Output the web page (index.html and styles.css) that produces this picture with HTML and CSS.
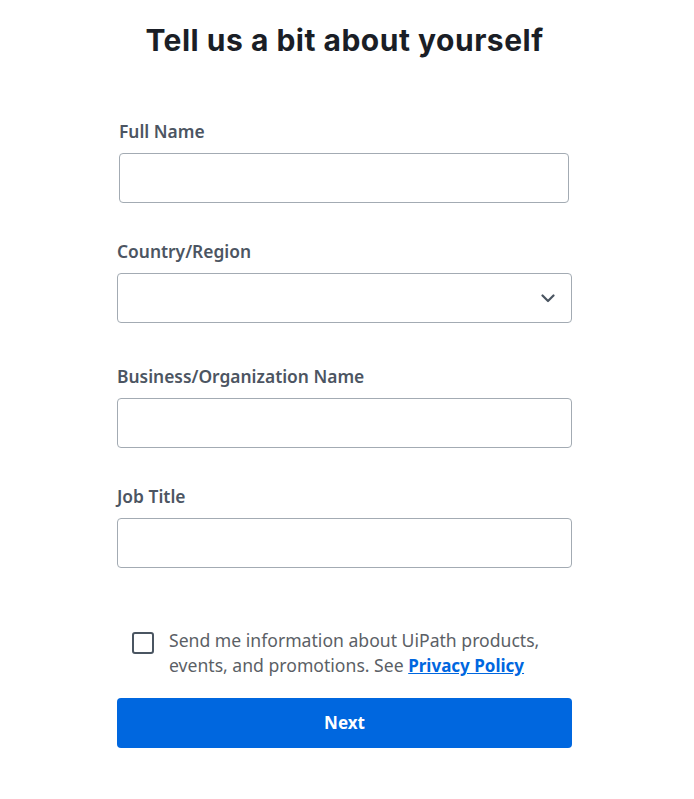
FILE: index.html
```html
<!DOCTYPE html>
<html lang="en">
<head>
<meta charset="utf-8">
<title>Tell us a bit about yourself</title>
<link rel="stylesheet" href="styles.css">
</head>
<body>
<main class="page">
  <h1 class="title">Tell us a bit about yourself</h1>
  <form class="form">
    <div class="field field-first">
      <label class="label" for="fullname">Full Name</label>
      <input class="input input-narrow" id="fullname" type="text">
    </div>
    <div class="field field-gap-a">
      <label class="label" for="country">Country/Region</label>
      <div class="select">
        <span class="select-value"></span>
        <svg class="chevron" width="14" height="9" viewBox="0 0 14 9" aria-hidden="true"><path d="M1.5 1.5 L7 7 L12.5 1.5" fill="none" stroke="#4a5561" stroke-width="2.2" stroke-linecap="round" stroke-linejoin="round"/></svg>
      </div>
    </div>
    <div class="field field-gap-b">
      <label class="label" for="org">Business/Organization Name</label>
      <input class="input" id="org" type="text">
    </div>
    <div class="field field-gap-a">
      <label class="label" for="job">Job Title</label>
      <input class="input" id="job" type="text">
    </div>
    <div class="consent">
      <span class="checkbox"></span>
      <p class="consent-text">Send me information about UiPath products, events, and promotions. See <a class="link" href="#">Privacy Policy</a></p>
    </div>
    <button class="button" type="button">Next</button>
  </form>
</main>
</body>
</html>
```

FILE: styles.css
```css
html, body {
  margin: 0;
  padding: 0;
  background: #ffffff;
}
body {
  font-family: "Noto Sans", "Open Sans", sans-serif;
}
.page {
  width: 455px;
  margin-left: 117px;
  padding-top: 20px;
}
.title {
  margin: 0;
  text-align: center;
  font-family: "Inter", "Noto Sans", sans-serif;
  font-weight: 700;
  font-size: 30px;
  line-height: 40px;
  letter-spacing: 0.5px;
  color: #1a1e26;
}
.form {
  display: flex;
  flex-direction: column;
}
.field {
  display: flex;
  flex-direction: column;
  gap: 11px;
}
.field-first {
  margin-top: 60px;
  padding-left: 2px;
  padding-right: 3px;
}
.field-gap-a {
  margin-top: 37px;
}
.field-gap-b {
  margin-top: 42px;
}
.label {
  font-size: 17.4px;
  font-weight: 600;
  line-height: 22px;
  color: #4c5562;
}
.input, .select {
  box-sizing: border-box;
  height: 50px;
  width: 100%;
  border: 1px solid #a3abb3;
  border-radius: 4px;
  background: #ffffff;
  margin: 0;
  padding: 0 14px;
  font: inherit;
}
.select {
  display: flex;
  align-items: center;
  justify-content: space-between;
  padding-right: 16px;
}
.chevron {
  display: block;
}
.consent {
  margin-top: 60px;
  display: flex;
  align-items: flex-start;
  gap: 15px;
  padding-left: 15px;
}
.checkbox {
  flex: none;
  box-sizing: border-box;
  width: 22px;
  height: 22px;
  margin-top: 3.5px;
  border: 2.5px solid #4a5561;
  border-radius: 3px;
  background: #ffffff;
}
.consent-text {
  margin: 0;
  font-size: 17.6px;
  line-height: 25px;
  color: #5b5f66;
}
.link {
  color: #0067df;
  font-size: 17px;
  font-weight: 700;
  text-decoration: underline;
}
.button {
  margin-top: 19.5px;
  height: 50px;
  width: 100%;
  border: 0;
  border-radius: 4px;
  background: #0067df;
  color: #ffffff;
  font-family: "Noto Sans", sans-serif;
  font-size: 17px;
  font-weight: 700;
  cursor: pointer;
}
```
